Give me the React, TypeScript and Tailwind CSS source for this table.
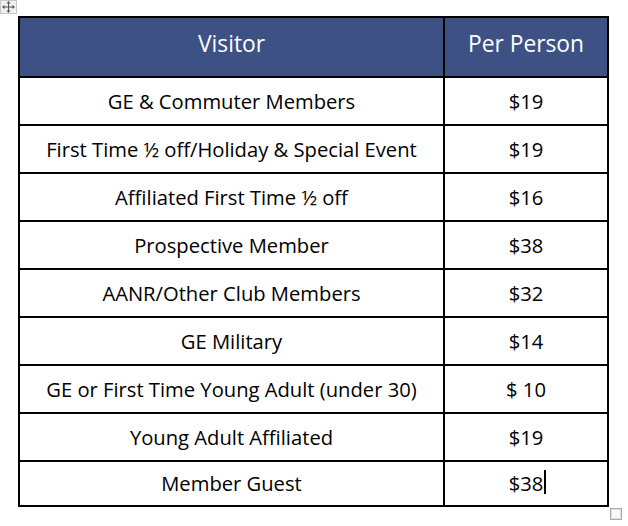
import React from "react";

const rows: [string, string][] = [
  ["GE & Commuter Members", "$19"],
  ["First Time ½ off/Holiday & Special Event", "$19"],
  ["Affiliated First Time ½ off", "$16"],
  ["Prospective Member", "$38"],
  ["AANR/Other Club Members", "$32"],
  ["GE Military", "$14"],
  ["GE or First Time Young Adult (under 30)", "$ 10"],
  ["Young Adult Affiliated", "$19"],
  ["Member Guest", "$38"],
];

export default function App() {
  return (
    <div className="relative w-[628px] h-[526px] bg-white" style={{ fontFamily: "'Open Sans', sans-serif" }}>
      {/* move handle */}
      <div className="absolute left-0 top-0 w-[17px] h-[14px] bg-[#f0f0f0] border border-[#c8c8c8] flex items-center justify-center">
        <svg width="13" height="12" viewBox="0 0 13 12">
          <g stroke="#555" strokeWidth="1" fill="none">
            <line x1="6.5" y1="1" x2="6.5" y2="11" />
            <line x1="1" y1="6" x2="12" y2="6" />
          </g>
          <g fill="#555">
            <polygon points="6.5,0 4.5,2.5 8.5,2.5" />
            <polygon points="6.5,12 4.5,9.5 8.5,9.5" />
            <polygon points="0,6 2.5,4 2.5,8" />
            <polygon points="13,6 10.5,4 10.5,8" />
          </g>
        </svg>
      </div>

      <div className="pt-[16px] pl-[18px]">
        <div className="w-[591px] border-2 border-black">
          <div className="flex h-[58px] bg-[#3d5184] text-white text-[22.8px] leading-none">
            <div className="w-[425px] border-r-2 border-black flex items-center justify-center pb-[5px]">Visitor</div>
            <div className="flex-1 flex items-center justify-center pb-[5px]">Per Person</div>
          </div>
          {rows.map(([v, p], i) => (
            <div
              key={i}
              className={
                "flex border-t-2 border-black text-black text-[20.2px] leading-none " +
                (i === rows.length - 1 ? "h-[45px]" : "h-[48px]")
              }
            >
              <div className="w-[425px] border-r-2 border-black flex items-center justify-center">{v}</div>
              <div className="flex-1 flex items-center justify-center">
                <span className="relative">
                  {p}
                  {i === rows.length - 1 && (
                    <span className="absolute right-[-3px] top-[-3px] w-[2px] h-[24px] bg-black" />
                  )}
                </span>
              </div>
            </div>
          ))}
        </div>
      </div>

      {/* resize handle */}
      <div className="absolute left-[610px] top-[508px] w-[12px] h-[12px] border border-[#a8a8a8] bg-[#fafafa] shadow-[inset_0_0_0_1px_#e0e0e0]" />
    </div>
  );
}
